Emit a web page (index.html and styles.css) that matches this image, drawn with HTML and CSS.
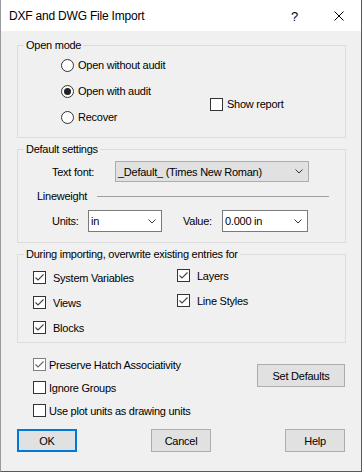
FILE: index.html
```html
<!DOCTYPE html>
<html lang="en">
<head>
<meta charset="UTF-8">
<meta name="viewport" content="width=device-width, initial-scale=1.0">
<title>DXF and DWG File Import</title>
<link rel="stylesheet" href="styles.css">
</head>
<body>
<div class="window">
  <div class="titlebar">
    <span class="title">DXF and DWG File Import</span>
    <span class="help-btn">?</span>
    <svg class="close-btn" width="10" height="10" viewBox="0 0 10 10">
      <path d="M0.5 0.5 L9.5 9.5 M9.5 0.5 L0.5 9.5" stroke="#000" stroke-width="1" fill="none"/>
    </svg>
  </div>

  <div class="content">
    <fieldset class="group">
      <legend>Open mode</legend>
      <div class="mode-grid">
        <div class="opt radio-opt"><span class="radio"></span>Open without audit</div>
        <div class="opt radio-opt"><span class="radio on"></span>Open with audit</div>
        <div class="opt radio-opt"><span class="radio"></span>Recover</div>
        <div class="opt report"><span class="check"></span>Show report</div>
      </div>
    </fieldset>

    <fieldset class="group settings">
      <legend>Default settings</legend>
      <div class="field-row font-row">
        <span class="lbl lbl-font">Text font:</span>
        <div class="select gray sel-font">
          <span>_Default_ (Times New Roman)</span>
          <svg class="chevron" width="8" height="5" viewBox="0 0 8 5"><polyline points="0.5,0.5 4,4 7.5,0.5" fill="none" stroke="#333" stroke-width="1"/></svg>
        </div>
      </div>
      <div class="lineweight">
        <span>Lineweight</span>
        <span class="rule"></span>
      </div>
      <div class="field-row units-row">
        <span class="lbl lbl-units">Units:</span>
        <div class="select sel-units">
          <span>in</span>
          <svg class="chevron" width="8" height="5" viewBox="0 0 8 5"><polyline points="0.5,0.5 4,4 7.5,0.5" fill="none" stroke="#333" stroke-width="1"/></svg>
        </div>
        <span class="lbl lbl-value">Value:</span>
        <div class="select sel-value">
          <span>0.000 in</span>
          <svg class="chevron" width="8" height="5" viewBox="0 0 8 5"><polyline points="0.5,0.5 4,4 7.5,0.5" fill="none" stroke="#333" stroke-width="1"/></svg>
        </div>
      </div>
    </fieldset>

    <fieldset class="group overwrite">
      <legend>During importing, overwrite existing entries for</legend>
      <div class="entries">
        <div class="entry-col first">
          <div class="opt entry"><span class="check"><svg width="11" height="11" viewBox="0 0 11 11"><polyline points="1.5,5.5 4,8 9.5,2.5" fill="none" stroke="#444" stroke-width="1.1"/></svg></span>System Variables</div>
          <div class="opt entry"><span class="check"><svg width="11" height="11" viewBox="0 0 11 11"><polyline points="1.5,5.5 4,8 9.5,2.5" fill="none" stroke="#444" stroke-width="1.1"/></svg></span>Views</div>
          <div class="opt entry"><span class="check"><svg width="11" height="11" viewBox="0 0 11 11"><polyline points="1.5,5.5 4,8 9.5,2.5" fill="none" stroke="#444" stroke-width="1.1"/></svg></span>Blocks</div>
        </div>
        <div class="entry-col second">
          <div class="opt entry"><span class="check"><svg width="11" height="11" viewBox="0 0 11 11"><polyline points="1.5,5.5 4,8 9.5,2.5" fill="none" stroke="#444" stroke-width="1.1"/></svg></span>Layers</div>
          <div class="opt entry"><span class="check"><svg width="11" height="11" viewBox="0 0 11 11"><polyline points="1.5,5.5 4,8 9.5,2.5" fill="none" stroke="#444" stroke-width="1.1"/></svg></span>Line Styles</div>
        </div>
      </div>
    </fieldset>

    <div class="extra">
      <div class="extra-checks">
        <div class="opt plain"><span class="check dim"><svg width="11" height="11" viewBox="0 0 11 11"><polyline points="1.5,5.5 4,8 9.5,2.5" fill="none" stroke="#666" stroke-width="1.1"/></svg></span>Preserve Hatch Associativity</div>
        <div class="opt plain"><span class="check"></span>Ignore Groups</div>
        <div class="opt plain"><span class="check"></span>Use plot units as drawing units</div>
      </div>
      <button class="btn defaults">Set Defaults</button>
    </div>

    <div class="actions">
      <button class="btn primary">OK</button>
      <button class="btn">Cancel</button>
      <button class="btn">Help</button>
    </div>
  </div>
</div>
</body>
</html>
```

FILE: styles.css
```css
body {
  margin: 0;
  font-family: 'Liberation Sans', Arial, sans-serif;
  font-size: 11px;
  letter-spacing: -0.25px;
  color: #000;
  background: #f0f0f0;
}
.window {
  width: 362px;
  height: 472px;
  box-sizing: border-box;
  background-color: #f0f0f0;
  border-left: 1px solid #9a9a9a;
  border-right: 1px solid #595959;
  border-bottom: 1px solid #595959;
}
.titlebar {
  height: 31px;
  background-color: #fff;
  display: flex;
  align-items: center;
  padding-left: 8px;
}
.title {
  font-size: 12px;
  letter-spacing: -0.2px;
  margin-right: auto;
  padding-top: 1px;
}
.help-btn {
  font-size: 13px;
  margin-right: 36px;
  padding-top: 1px;
}
.close-btn {
  margin-right: 17px;
}
.content {
  padding: 0 15px 0 16px;
}
.group {
  margin: 4px 0 0;
  padding: 0;
  border: 1px solid #dcdcdc;
  min-width: 0;
}
.group:first-child {
  margin-top: 7px;
}
legend {
  margin-left: 6px;
  padding: 0 2px;
  line-height: 14px;
}
.opt {
  display: flex;
  align-items: center;
  white-space: nowrap;
}
.radio {
  width: 13px;
  height: 13px;
  box-sizing: border-box;
  border: 1px solid #333;
  border-radius: 50%;
  background-color: #fff;
  margin-right: 4px;
  display: flex;
  align-items: center;
  justify-content: center;
}
.radio.on::after {
  content: "";
  width: 7px;
  height: 7px;
  border-radius: 50%;
  background-color: #222;
}
.check {
  width: 13px;
  height: 13px;
  box-sizing: border-box;
  border: 1px solid #333;
  background-color: #fff;
  margin-right: 4px;
  display: flex;
}
.check.dim {
  border-color: #808080;
}
.mode-grid {
  display: grid;
  grid-template-columns: 149px auto;
  grid-template-rows: 26px 26px 26px;
  padding: 0 0 7px 43px;
}
.radio-opt {
  grid-column: 1;
}
.report {
  grid-column: 2;
  grid-row: 2 / span 2;
}
.settings {
  padding: 5px 0 10px;
}
.field-row {
  display: flex;
  align-items: center;
  padding-left: 34px;
}
.lbl-font {
  width: 63px;
}
.lbl-units {
  width: 36px;
}
.lbl-value {
  width: 39px;
  margin-left: 21px;
}
.select {
  display: flex;
  align-items: center;
  box-sizing: border-box;
  height: 22px;
  border: 1px solid #7a7a7a;
  background-color: #fff;
  padding-left: 2px;
}
.select.gray {
  height: 21px;
  background-color: #e1e1e1;
  border-color: #adadad;
}
.chevron {
  margin-left: auto;
  margin-right: 5px;
}
.sel-font {
  width: 194px;
}
.sel-units {
  width: 74px;
}
.sel-value {
  width: 86px;
}
.lineweight {
  display: flex;
  align-items: center;
  height: 14px;
  margin: 7px 0;
  padding-left: 19px;
}
.rule {
  flex: 1;
  height: 1px;
  background-color: #a0a0a0;
  margin: 0 16px 0 10px;
}
.overwrite {
  padding-bottom: 2px;
}
.entries {
  display: flex;
  padding-left: 15px;
}
.entry-col.first {
  width: 144px;
  padding-top: 4px;
}
.entry-col.second {
  padding-top: 2px;
}
.entry {
  height: 25px;
}
.entry .check {
  margin-right: 7px;
}
.extra {
  display: flex;
  align-items: flex-start;
  margin-top: 10px;
  padding-left: 16px;
}
.plain {
  height: 23px;
}
.plain .check {
  margin-right: 3px;
}
.btn {
  font-family: 'Liberation Sans', Arial, sans-serif;
  font-size: 11px;
  letter-spacing: -0.25px;
  color: #000;
  width: 60px;
  height: 23px;
  box-sizing: border-box;
  background-color: #e1e1e1;
  border: 1px solid #adadad;
  padding: 0;
}
.defaults {
  width: 88px;
  margin: 11px 1px 0 auto;
}
.actions {
  display: flex;
  justify-content: space-between;
  margin-top: 7px;
  padding-right: 1px;
}
.btn.primary {
  border: 2px solid #0078d7;
}
```
